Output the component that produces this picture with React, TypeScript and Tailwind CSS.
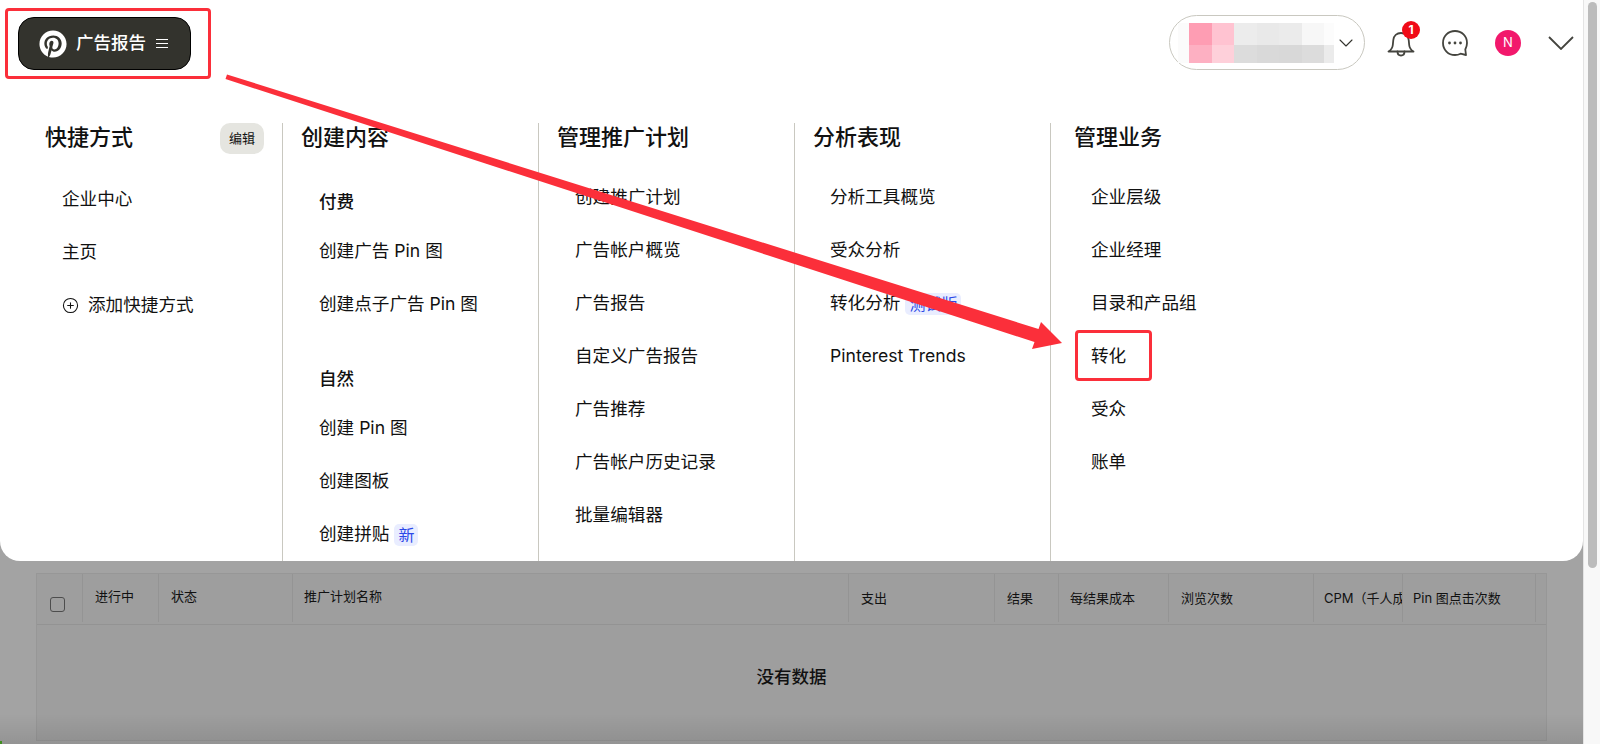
import { FaPinterest } from 'react-icons/fa';
import { ChevronDown, CirclePlus } from 'lucide-react';

function Item({ label, tag }: { label: string; tag?: string }) {
  return (
    <div className="h-[53px] flex items-center gap-[5px] text-[17.6px] text-[#111]">
      <span>{label}</span>
      {tag && <span className="px-[4px] h-[22px] leading-[22px] rounded-[5px] bg-[#e9edff] text-[#2b48e8] text-[16px]">{tag}</span>}
    </div>
  );
}

function Column({ title, className, children }: { title: string; className: string; children: React.ReactNode }) {
  return (
    <div className={`w-[256px] border-l border-[#c9c8c0] ${className}`}>
      <div className="h-[29px] leading-[29px] text-[22px] font-medium text-[#111]">{title}</div>
      {children}
    </div>
  );
}

const mosaicTop = ['bg-[#fe9db3]', 'bg-[#ffc3d1]', 'bg-[#ececec]', 'bg-[#e9e9e9]', 'bg-[#ebebeb]', 'bg-[#f7f7f7]'];
const mosaicBottom = ['bg-[#fdb0c2]', 'bg-[#fed0da]', 'bg-[#dcdcdc]', 'bg-[#d9d9d9]', 'bg-[#d8d8d8]', 'bg-[#dcdcdc]'];

const tableCols = [
  { label: '', width: 'w-[46px]', pad: 'pt-[12px]' },
  { label: '进行中', width: 'w-[76px]', pad: 'pl-[12px] pt-[13px]' },
  { label: '状态', width: 'w-[134px]', pad: 'pl-[12px] pt-[13px]' },
  { label: '推广计划名称', width: 'w-[556px]', pad: 'pl-[11px] pt-[13px]' },
  { label: '支出', width: 'w-[146px]', pad: 'pl-[12px] pt-[15px]' },
  { label: '结果', width: 'w-[64px]', pad: 'pl-[12px] pt-[15px]' },
  { label: '每结果成本', width: 'w-[110px]', pad: 'pl-[11px] pt-[15px]' },
  { label: '浏览次数', width: 'w-[145px]', pad: 'pl-[12px] pt-[15px]' },
  { label: 'CPM（千人成本）', width: 'w-[89px]', pad: 'pl-[10px] pt-[15px]' },
  { label: 'Pin 图点击次数', width: 'w-[133px]', pad: 'pl-[10px] pt-[15px]' },
];

export default function App() {
  return (
    <div className="relative w-[1600px] h-[744px] overflow-hidden flex bg-[#a3a3a3] font-['Inter','Noto_Sans_CJK_SC',sans-serif]">
      <div className="w-[1583px] flex flex-col">
        {/* dropdown menu */}
        <div className="h-[561px] shrink-0 bg-white rounded-b-[20px] flex flex-col">
          <div className="h-[123px] shrink-0 flex items-start justify-between pl-[18px]">
            <button className="mt-[17px] w-[173px] h-[53px] rounded-[16px] bg-[#33332d] border border-black flex items-center pl-[20px] text-white">
              <FaPinterest className="w-[28px] h-[28px]" />
              <span className="ml-[9px] text-[17.5px] font-medium">广告报告</span>
              <span className="ml-[10px] flex flex-col gap-[3px] w-[12px]">
                <i className="h-px bg-white" />
                <i className="h-px bg-white" />
                <i className="h-px bg-white" />
              </span>
            </button>
            <div className="flex items-center mt-[15px] pr-[9px]">
              <div className="w-[196px] h-[55px] rounded-full border border-[#c9c8c0] flex items-center pl-[8px]">
                <div className="flex flex-col">
                  <div className="flex h-[22px]">
                    <div className="w-[11px] bg-[#fbfbfb]" />
                    {mosaicTop.map((c, i) => <div key={i} className={`w-[22.5px] ${c}`} />)}
                    <div className="w-[10px] bg-[#fcfcfc]" />
                  </div>
                  <div className="flex h-[18px]">
                    <div className="w-[11px] bg-[#fbfbfb]" />
                    {mosaicBottom.map((c, i) => <div key={i} className={`w-[22.5px] ${c}`} />)}
                    <div className="w-[10px] bg-[#ebebeb]" />
                  </div>
                </div>
                <ChevronDown className="w-[24px] h-[24px] text-[#33332d]" strokeWidth={1.1} />
              </div>
              <div className="relative ml-[20px] w-[32px] h-[32px] flex items-center justify-center">
                <svg viewBox="0 0 28 28" className="w-[28px] h-[28px]" fill="none" stroke="#44443e" strokeWidth="1.8" strokeLinejoin="round" strokeLinecap="round">
                  <path d="M1.500 22.500h25c-2.500-1.500-4-3-4.300-6.500l-.5-5c-.4-4-3.500-7-7.700-7s-7.300 3-7.700 7l-.5 5c-.3 3.500-1.800 5-4.300 6.500z" />
                  <path d="M10.500 22.500c0 2.500 1.500 4 3.500 4s3.500-1.500 3.500-4" />
                </svg>
                <div className="absolute -top-[6px] left-[17px] w-[18px] h-[18px] rounded-full bg-[#f00b17] text-white text-[12px] font-bold flex items-center justify-center">1</div>
              </div>
              <svg viewBox="0 0 28 28" className="ml-[24px] w-[28px] h-[28px]" fill="none" stroke="#44443e" strokeWidth="1.8" strokeLinejoin="round">
                <path d="M14 2C7.200 2 2 7.200 2 14s5.200 12 12 12c2 0 4-.5 5.500-1.300l5.500 1.300-.7-5.500C25.300 18.500 26 16.300 26 14 26 7.200 20.800 2 14 2z" />
                <circle cx="8.500" cy="14" r="1.400" fill="#44443e" stroke="none" />
                <circle cx="14" cy="14" r="1.400" fill="#44443e" stroke="none" />
                <circle cx="19.500" cy="14" r="1.400" fill="#44443e" stroke="none" />
              </svg>
              <div className="ml-[26px] w-[26px] h-[26px] rounded-full bg-[#f2186c] text-white text-[13px] flex items-center justify-center">N</div>
              <svg viewBox="0 0 26 14" className="ml-[27px] w-[26px] h-[14px]" fill="none" stroke="#44443e" strokeWidth="1.8">
                <path d="M1 1l12 12L25 1" />
              </svg>
            </div>
          </div>
          <div className="flex-1 flex">
            <div className="w-[282px] pl-[45px] pr-[18px]">
              <div className="flex items-center justify-between h-[31px]">
                <span className="text-[22px] font-medium text-[#111] pb-[2px]">快捷方式</span>
                <span className="w-[44px] h-[31px] rounded-[10px] bg-[#e5e5e0] text-[13px] text-[#111] flex items-center justify-center">编辑</span>
              </div>
              <div className="mt-[19px] pl-[17px]">
                <Item label="企业中心" />
                <Item label="主页" />
                <div className="h-[53px] flex items-center gap-[9px] text-[17.6px] text-[#111]">
                  <CirclePlus className="w-[17px] h-[17px]" strokeWidth={1.5} />
                  <span>添加快捷方式</span>
                </div>
              </div>
            </div>
            <Column title="创建内容" className="pl-[18px]">
              <div className="mt-[24px] pl-[18px]">
                <div className="h-[49px] pt-[4px] flex items-center text-[17.6px] font-medium text-[#111]">付费</div>
                <Item label="创建广告 Pin 图" />
                <Item label="创建点子广告 Pin 图" />
                <div className="mt-[22px] h-[49px] pt-[4px] flex items-center text-[17.6px] font-medium text-[#111]">自然</div>
                <Item label="创建 Pin 图" />
                <Item label="创建图板" />
                <Item label="创建拼贴" tag="新" />
              </div>
            </Column>
            <Column title="管理推广计划" className="pl-[18px]">
              <div className="mt-[19px] pl-[18px]">
                <Item label="创建推广计划" />
                <Item label="广告帐户概览" />
                <Item label="广告报告" />
                <Item label="自定义广告报告" />
                <Item label="广告推荐" />
                <Item label="广告帐户历史记录" />
                <Item label="批量编辑器" />
              </div>
            </Column>
            <Column title="分析表现" className="pl-[18px]">
              <div className="mt-[19px] pl-[17px]">
                <Item label="分析工具概览" />
                <Item label="受众分析" />
                <Item label="转化分析" tag="测试版" />
                <Item label="Pinterest Trends" />
              </div>
            </Column>
            <Column title="管理业务" className="pl-[23px]">
              <div className="mt-[19px] pl-[17px]">
                <Item label="企业层级" />
                <Item label="企业经理" />
                <Item label="目录和产品组" />
                <Item label="转化" />
                <Item label="受众" />
                <Item label="账单" />
              </div>
            </Column>
          </div>
        </div>

        {/* dimmed table behind the menu */}
        <div className="mt-[12px] mb-[3px] ml-[36px] w-[1511px] flex-1 flex flex-col border border-[#979797] bg-[#9e9e9e]">
          <div className="h-[51px] shrink-0 flex border-b border-[#939393] text-[13px] text-[#111]">
            {tableCols.map((col, i) => (
              <div key={i} className={`${col.width} ${col.pad} shrink-0 h-[48px] overflow-hidden whitespace-nowrap border-r border-[#949494]`}>
                {i === 0 ? <div className="ml-[13px] mt-[11px] w-[15px] h-[15px] rounded-[3px] border border-[#4d4d4d]" /> : col.label}
              </div>
            ))}
          </div>
          <div className="h-[104px] flex items-center justify-center text-[17.5px] font-medium text-[#111]">没有数据</div>
        </div>
      </div>

      {/* scrollbar */}
      <div className="w-[17px] bg-[#f8f8f8] border-l border-[#e4e4e4] pl-[4px] pt-[2px]">
        <div className="w-[9px] h-[566px] rounded-full bg-[#bcbcbc]" />
      </div>

      {/* bottom fade */}
      <div className="absolute left-0 bottom-0 w-[1583px] h-[30px] bg-gradient-to-b from-transparent to-[#00000018] pointer-events-none" />
      <div className="absolute left-0 bottom-0 w-[2px] h-[3px] bg-[#3f8f1f]" />

      {/* annotations */}
      <div className="absolute left-[5px] top-[8px] w-[206px] h-[71px] border-[3px] border-[#fb2f3a] rounded-[4px] pointer-events-none" />
      <div className="absolute left-[1075px] top-[330px] w-[77px] h-[51px] border-[3px] border-[#fb2f3a] rounded-[4px] pointer-events-none" />
      <svg className="absolute left-0 top-0 w-[1600px] h-[744px] pointer-events-none" viewBox="0 0 1600 744">
        <path d="M227 74.500L1038.500 329 1041 322 1062 343 1032 349 1034.500 342 225.500 79z" fill="#fb2f3a" />
      </svg>
    </div>
  );
}
